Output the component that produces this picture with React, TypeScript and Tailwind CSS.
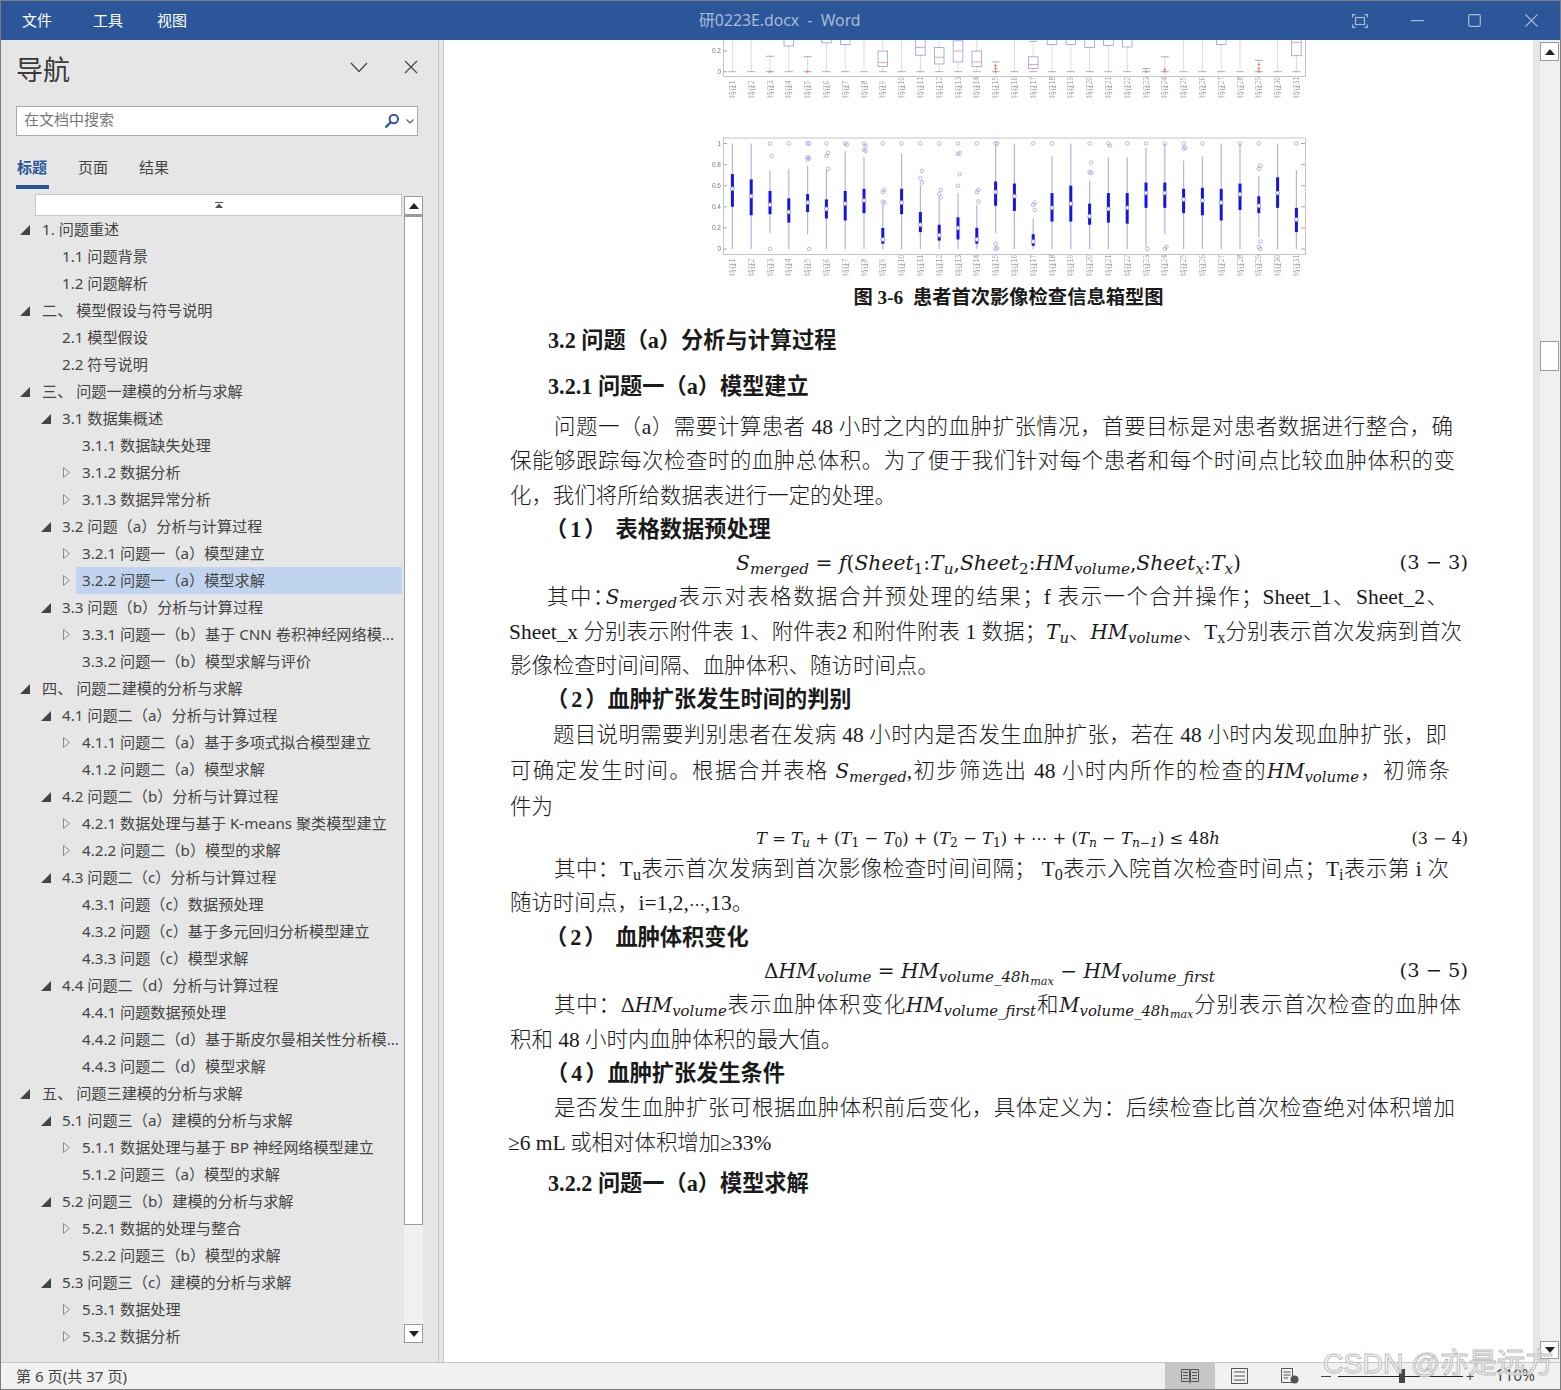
import React from "react";

type Row = [number, "o" | "c" | "", string];
const rows: Row[] = [
  [1, "o", "1. 问题重述"],
  [2, "", "1.1 问题背景"],
  [2, "", "1.2 问题解析"],
  [1, "o", "二、 模型假设与符号说明"],
  [2, "", "2.1 模型假设"],
  [2, "", "2.2 符号说明"],
  [1, "o", "三、 问题一建模的分析与求解"],
  [2, "o", "3.1 数据集概述"],
  [3, "", "3.1.1 数据缺失处理"],
  [3, "c", "3.1.2 数据分析"],
  [3, "c", "3.1.3 数据异常分析"],
  [2, "o", "3.2 问题（a）分析与计算过程"],
  [3, "c", "3.2.1 问题一（a）模型建立"],
  [3, "c", "3.2.2 问题一（a）模型求解"],
  [2, "o", "3.3 问题（b）分析与计算过程"],
  [3, "c", "3.3.1 问题一（b）基于 CNN 卷积神经网络模..."],
  [3, "", "3.3.2 问题一（b）模型求解与评价"],
  [1, "o", "四、 问题二建模的分析与求解"],
  [2, "o", "4.1 问题二（a）分析与计算过程"],
  [3, "c", "4.1.1 问题二（a）基于多项式拟合模型建立"],
  [3, "", "4.1.2 问题二（a）模型求解"],
  [2, "o", "4.2 问题二（b）分析与计算过程"],
  [3, "c", "4.2.1 数据处理与基于 K-means 聚类模型建立"],
  [3, "c", "4.2.2 问题二（b）模型的求解"],
  [2, "o", "4.3 问题二（c）分析与计算过程"],
  [3, "", "4.3.1 问题（c）数据预处理"],
  [3, "", "4.3.2 问题（c）基于多元回归分析模型建立"],
  [3, "", "4.3.3 问题（c）模型求解"],
  [2, "o", "4.4 问题二（d）分析与计算过程"],
  [3, "", "4.4.1 问题数据预处理"],
  [3, "", "4.4.2 问题二（d）基于斯皮尔曼相关性分析模..."],
  [3, "", "4.4.3 问题二（d）模型求解"],
  [1, "o", "五、 问题三建模的分析与求解"],
  [2, "o", "5.1 问题三（a）建模的分析与求解"],
  [3, "c", "5.1.1 数据处理与基于 BP 神经网络模型建立"],
  [3, "", "5.1.2 问题三（a）模型的求解"],
  [2, "o", "5.2 问题三（b）建模的分析与求解"],
  [3, "c", "5.2.1 数据的处理与整合"],
  [3, "", "5.2.2 问题三（b）模型的求解"],
  [2, "o", "5.3 问题三（c）建模的分析与求解"],
  [3, "c", "5.3.1 数据处理"],
  [3, "c", "5.3.2 数据分析"],
];

type B = [number, number, number, number, number, number[]];
const boxes2: B[] = [
  [.4,.71,.57,0,1,[]],[.32,.66,.5,0,1,[]],[.33,.55,.42,.15,.74,[1,.88,0]],[.25,.48,.35,0,.76,[1]],
  [.35,.52,.44,.14,.79,[1,1,.87,.86,.85,0]],[.29,.47,.38,0,.75,[1,.91,.88,.76]],[.27,.55,.43,0,.93,[1,.99]],
  [.34,.57,.46,0,.87,[1,.98,.94,.93]],[.05,.2,.09,0,.42,[1,.56,.54,.44,.45]],[.33,.57,.44,0,.9,[1]],
  [.16,.35,.23,0,.61,[1,.74,.67,.63]],[.08,.23,.13,0,.48,[1,.56,.52,.49]],[.09,.3,.2,0,.53,[1,.91,.9,.71,.6]],
  [.05,.2,.09,0,.42,[1,.56,.54,.45]],[.41,.64,.54,.15,.98,[1,1,.05,.01,0]],[.36,.62,.5,0,1,[]],
  [.03,.14,.07,0,.29,[1,.44,.42,.37]],[.26,.53,.39,0,.88,[1]],[.26,.6,.43,0,1,[]],[.23,.43,.31,0,.65,[1,.82,.73,.72]],
  [.25,.53,.38,0,.87,[1,.98]],[.24,.53,.39,0,.87,[1]],[.39,.63,.53,.02,.96,[1,0]],[.39,.63,.53,.14,1,[1,.02,0]],
  [.34,.57,.47,0,.84,[1,.96,.95]],[.32,.58,.46,0,.88,[1]],[.27,.57,.44,0,1,[]],[.37,.62,.52,0,1,[1]],
  [.34,.5,.41,.11,.69,[1,.79,.76,.07,.02,0]],[.39,.68,.53,0,1,[]],[.16,.39,.28,0,.75,[1]],
];
const boxes1: [number, number, number, number, number[]][] = [
  [-1,0,0,1,[]],[-1,0,0,1,[]],[-1,0,0,.15,[0]],[.25,1,-1,1,[]],[-1,0,0,.145,[0]],[.28,1,-1,1,[]],[.265,1,-1,1,[]],[-1,0,0,1,[]],
  [.05,.2,.09,1,[]],[-1,0,0,1,[]],[.16,1,.235,1,[]],[.075,.235,.14,1,[]],[.095,.3,.2,1,[]],[.05,.2,.095,1,[]],[-1,0,0,.095,[.06,.03,0]],
  [-1,0,0,1,[]],[.03,.145,.07,.295,[]],[.265,1,-1,1,[]],[.265,1,-1,1,[]],[.235,1,-1,1,[]],[.255,1,-1,1,[]],[.24,1,-1,1,[]],
  [-1,0,0,.03,[0]],[-1,0,0,.145,[.02,0]],[-1,0,0,1,[]],[-1,0,0,1,[]],[.265,1,-1,1,[]],[-1,0,0,1,[]],[-1,0,0,.11,[.07,.03,0]],[-1,0,0,1,[]],[.155,1,.285,1,[]],
];

const X = (i: number) => 17.4 + i * 18.8;

function XLabels({ y }: { y: number }) {
  return (
    <g fill="#7c7c7c" fontSize="6.9" fontFamily="'Noto Sans CJK SC', sans-serif">
      {boxes2.map((_, i) => (
        <text key={i} transform={`translate(${X(i) + 2.5},${y}) rotate(-90)`}>{`特征${i + 1}`}</text>
      ))}
    </g>
  );
}

function TopChart() {
  const Y = (v: number) => 31.7 - v * 103;
  return (
    <svg width="620" height="60" viewBox="-16 0 620 60" className="block ml-[255px] blur-[0.3px]">
      <line x1="8.5" y1="0" x2="8.5" y2="36.5" stroke="#c4c4c4" />
      <line x1="8" y1="36.5" x2="590" y2="36.5" stroke="#c4c4c4" />
      <line x1="590.5" y1="0" x2="590.5" y2="36.5" stroke="#c4c4c4" />
      <g fill="#777" fontSize="6.5" fontFamily="'Liberation Sans', sans-serif" textAnchor="end">
        <text x="6" y="13.3">0.2</text>
        <text x="6" y="34">0</text>
      </g>
      <line x1="8" y1="11" x2="12" y2="11" stroke="#aaa" />
      <line x1="8" y1="31.7" x2="12" y2="31.7" stroke="#aaa" />
      {boxes1.map((b, i) => {
        const x = X(i);
        const [q1, q3, m, cap, out] = b;
        const hasBox = q1 >= 0;
        return (
          <g key={i}>
            <line x1={x} x2={x} y1={Y(cap)} y2={31.7} stroke="#999" strokeDasharray="1 1" strokeWidth="0.7" />
            {cap < 1 && <line x1={x - 4} x2={x + 4} y1={Y(cap)} y2={Y(cap)} stroke="#888" strokeWidth="0.7" />}
            <line x1={x - 4} x2={x + 4} y1={31.7} y2={31.7} stroke="#999" strokeWidth="0.8" />
            {hasBox && (
              <rect x={x - 4.8} y={Y(q3)} width="9.6" height={Y(q1) - Y(q3)} fill="white" stroke="#9a9ae0" strokeWidth="0.8" />
            )}
            {hasBox && m >= 0 && <line x1={x - 4.8} x2={x + 4.8} y1={Y(m)} y2={Y(m)} stroke="#ef9a9a" strokeWidth="0.9" />}
            {out.map((o, k) => (
              <path key={k} d={`M${x - 1.6} ${Y(o)}H${x + 1.6}M${x} ${Y(o) - 1.6}V${Y(o) + 1.6}`} stroke="#ef7a7a" strokeWidth="0.8" />
            ))}
          </g>
        );
      })}
      <XLabels y={58} />
    </svg>
  );
}

function MainChart() {
  const Y = (v: number) => 112 - v * 105.5;
  return (
    <svg width="620" height="142" viewBox="-16 0 620 142" className="block ml-[255px] mt-[37px] blur-[0.3px]">
      <rect x="8.5" y="1" width="582" height="116.5" fill="white" stroke="#c4c4c4" />
      <g fill="#777" fontSize="6.5" fontFamily="'Liberation Sans', sans-serif" textAnchor="end">
        {[0, .2, .4, .6, .8, 1].map((v) => (
          <g key={v}>
            <text x="6" y={Y(v) + 2.2}>{v === 0 || v === 1 ? String(v) : v.toFixed(1)}</text>
            <line x1="8.5" x2="12" y1={Y(v)} y2={Y(v)} stroke="#aaa" />
            <line x1="586" x2="590" y1={Y(v)} y2={Y(v)} stroke="#aaa" />
          </g>
        ))}
      </g>
      {boxes2.map((b, i) => {
        const x = X(i);
        const [q1, q3, m, lo, hi, out] = b;
        return (
          <g key={i}>
            <line x1={x} x2={x} y1={Y(hi)} y2={Y(lo)} stroke="#b4b4e2" strokeWidth="1.2" />
            <line x1={x} x2={x} y1={Y(q3)} y2={Y(q1)} stroke="#1414e6" strokeWidth="3" />
            <circle cx={x} cy={Y(m)} r="2" fill="#eeeef8" stroke="#8c8c9c" strokeWidth="0.6" />
            {out.map((o, k) => (
              <circle key={k} cx={x + (k % 2 === 0 ? 0 : 1.6)} cy={Y(o)} r="1.8" fill="none" stroke="#8a8ad6" strokeWidth="0.6" />
            ))}
          </g>
        );
      })}
      <XLabels y={139} />
    </svg>
  );
}

function Arrow({ kind }: { kind: "o" | "c" | "" }) {
  if (kind === "o")
    return (
      <svg width="10" height="10" viewBox="0 0 10 10" className="block"><polygon points="10,0 10,10 0,10" fill="#444" /></svg>
    );
  if (kind === "c")
    return (
      <svg width="7" height="11" viewBox="0 0 7 11" className="block"><polygon points="0.5,0.5 6.5,5.5 0.5,10.5" fill="none" stroke="#8a8a8a" /></svg>
    );
  return null;
}

function TreeRow({ row, active }: { row: Row; active: boolean }) {
  const [lvl, kind, text] = row;
  const lead = lvl === 1 ? "pl-[19px]" : lvl === 2 ? "pl-[40px]" : "pl-[62px]";
  const tw = lvl === 1 ? "ml-[5px]" : lvl === 2 ? "ml-[4px]" : "ml-[6px]";
  const aw = lvl === 3 ? "w-[7px]" : "w-[11px]";
  return (
    <div className={`flex items-center h-[27px] ${lead}`}>
      <div className={`${aw} flex items-center shrink-0`}><Arrow kind={kind} /></div>
      <div className={`${tw} flex-1 h-[27px] leading-[26px] whitespace-nowrap overflow-hidden pl-[6px] ${active ? "bg-[#c0d4ef]" : ""}`}>
        {text}
      </div>
    </div>
  );
}

function M({ children }: { children: React.ReactNode }) {
  return <span className="[font-family:'DejaVu_Serif',serif] italic font-normal">{children}</span>;
}
function I({ children }: { children: React.ReactNode }) {
  return <span className="[font-family:'DejaVu_Serif',serif] italic font-normal text-[19.8px]">{children}</span>;
}
function Num({ children }: { children: React.ReactNode }) {
  return <span className="mx-[3px]">{children}</span>;
}

function Nav() {
  return (
    <aside className="w-[437px] shrink-0 bg-[#e6e6e6] flex flex-col [font-family:'Noto_Sans','Noto_Sans_CJK_SC',sans-serif] text-[#444] text-[15.15px]">
      <div className="h-[66px] flex items-center pl-[15px] pr-[20px] shrink-0">
        <div className="text-[27px] text-[#3a3a3a] leading-none mt-[-7px]">导航</div>
        <svg width="18" height="11" viewBox="0 0 18 11" className="ml-auto mt-[-12px]"><path d="M1 1 L9 9.5 L17 1" fill="none" stroke="#444" strokeWidth="1.2" /></svg>
        <svg width="14" height="14" viewBox="0 0 14 14" className="ml-[36px] mt-[-12px]"><path d="M1 1 L13 13 M13 1 L1 13" fill="none" stroke="#444" strokeWidth="1.2" /></svg>
      </div>
      <div className="mx-[15px] w-[402px] h-[30px] bg-white border border-[#ababab] flex items-center pl-[7px] pr-[2px] shrink-0">
        <span className="text-[#777] text-[15px] mt-[-3px]">在文档中搜索</span>
        <svg width="16" height="16" viewBox="0 0 16 16" className="ml-auto"><circle cx="9.8" cy="6" r="4.2" fill="none" stroke="#2b579a" strokeWidth="2" /><path d="M6.8 9 L1.5 14.5" stroke="#2b579a" strokeWidth="2.4" /></svg>
        <svg width="8" height="5" viewBox="0 0 8 5" className="ml-[6px] mr-[1px]"><path d="M0.5 0.5 L4 4 L7.5 0.5" fill="none" stroke="#555" strokeWidth="1.1" /></svg>
      </div>
      <div className="h-[58px] pl-[15px] flex items-start pt-[20px] shrink-0 text-[15px]">
        <div className="text-[#2b579a] font-semibold h-[33px] w-[33px] leading-[22px] pl-[1px] border-b-[4px] border-[#2b579a] whitespace-nowrap">标题</div>
        <div className="leading-[22px] ml-[29px]">页面</div>
        <div className="leading-[22px] ml-[31px]">结果</div>
      </div>
      <div className="flex-1 flex min-h-0">
        <div className="w-[401px] mr-[2px] shrink-0 flex flex-col">
          <div className="ml-[34px] w-[367px] h-[22px] bg-white border border-[#c6c6c6] flex items-center justify-center shrink-0">
            <svg width="8" height="6" viewBox="0 0 8 6"><rect x="0" y="0" width="8" height="1" fill="#555" /><polygon points="4,1.5 8,6 0,6" fill="#555" /></svg>
          </div>
          {rows.map((r, i) => (
            <TreeRow key={i} row={r} active={i === 13} />
          ))}
        </div>
        <div className="w-[19px] flex flex-col mt-[2px] bg-[#f0f0f0] h-[1147px]">
          <div className="h-[19px] bg-white border border-[#9a9a9a] flex items-center justify-center shrink-0">
            <svg width="10" height="6" viewBox="0 0 10 6"><polygon points="5,0 10,6 0,6" fill="#222" /></svg>
          </div>
          <div className="h-[1010px] bg-white border border-[#9a9a9a] border-t-2 shrink-0" />
          <div className="flex-1" />
          <div className="h-[19px] bg-white border border-[#9a9a9a] flex items-center justify-center shrink-0">
            <svg width="10" height="6" viewBox="0 0 10 6"><polygon points="0,0 10,0 5,6" fill="#222" /></svg>
          </div>
        </div>
      </div>
    </aside>
  );
}

const P = "ml-[66px] w-[945px] whitespace-nowrap [text-align-last:justify]";
const H = "font-bold text-[22.2px] whitespace-nowrap";
const E = "ml-[66px] w-[958px] flex whitespace-nowrap [font-family:'DejaVu_Serif',serif]";

function Doc() {
  return (
    <main className="w-[1089px] shrink-0 bg-white overflow-hidden [font-family:'Liberation_Serif','Noto_Sans_CJK_SC',serif] text-[21.45px] font-light text-[#1a1a1a]">
      <TopChart />
      <MainChart />
      <div className="h-[37px] leading-[37px] text-center font-bold text-[19.3px] pl-[40px]">图 3-6&nbsp;&nbsp;患者首次影像检查信息箱型图</div>
      <div className={`h-[50px] leading-[50px] ml-[104px] ${H}`}>3.2 问题（a）分析与计算过程</div>
      <div className={`h-[42px] leading-[42px] ml-[104px] ${H}`}>3.2.1 问题一（a）模型建立</div>
      <div className="h-[38px] leading-[38px] ml-[110px] w-[899px] whitespace-nowrap [text-align-last:justify]">问题一（a）需要计算患者 48 小时之内的血肿扩张情况，首要目标是对患者数据进行整合，确</div>
      <div className={`h-[30px] leading-[30px] ${P}`}>保能够跟踪每次检查时的血肿总体积。为了便于我们针对每个患者和每个时间点比较血肿体积的变</div>
      <div className="h-[40px] leading-[40px] ml-[66px] whitespace-nowrap">化，我们将所给数据表进行一定的处理。</div>
      <div className={`h-[28px] leading-[28px] ml-[101px] ${H}`}>（<Num>1</Num>）<span className="ml-[9px]">表格数据预处理</span></div>
      <div className={`h-[38px] leading-[38px] ${E} text-[19.4px]`}>
        <div className="ml-[226px] text-[20.3px]"><M>S<sub>merged</sub></M> = <M>f</M>(<M>Sheet</M><sub>1</sub>:<M>T<sub>u</sub></M>,<M>Sheet</M><sub>2</sub>:<M>HM<sub>volume</sub></M>,<M>Sheet<sub>x</sub></M>:<M>T<sub>x</sub></M>)</div>
        <div className="ml-auto">(3 − 3)</div>
      </div>
      <div className="h-[30px] leading-[30px] ml-[103px] w-[901px] whitespace-nowrap [text-align-last:justify]">其中<span className="tracking-[-10px]">：</span><I>S<sub>merged</sub></I>表示对表格数据合并预处理的结果；f 表示一个合并操作；Sheet_1、Sheet_2、</div>
      <div className="h-[40px] leading-[40px] ml-[65px] w-[953px] whitespace-nowrap [text-align-last:justify]">Sheet_x 分别表示附件表 1、附件表2 和附件附表 1 数据；<I>T<sub>u</sub></I>、<I>HM<sub>volume</sub></I>、T<sub>x</sub>分别表示首次发病到首次</div>
      <div className="h-[28px] leading-[28px] ml-[66px] whitespace-nowrap">影像检查时间间隔、血肿体积、随访时间点。</div>
      <div className={`h-[40px] leading-[40px] ml-[102px] ${H}`}>（<Num>2</Num>）血肿扩张发生时间的判别</div>
      <div className="h-[30px] leading-[30px] ml-[109px] w-[894px] whitespace-nowrap [text-align-last:justify]">题目说明需要判别患者在发病 48 小时内是否发生血肿扩张，若在 48 小时内发现血肿扩张，即</div>
      <div className="h-[42px] leading-[42px] ml-[66px] w-[940px] whitespace-nowrap [text-align-last:justify]">可确定发生时间。根据合并表格 <I>S<sub>merged</sub></I>,初步筛选出 48 小时内所作的检查的<I>HM<sub>volume</sub></I>，初筛条</div>
      <div className="h-[30px] leading-[30px] ml-[66px]">件为</div>
      <div className={`h-[34px] leading-[34px] ${E} text-[16px]`}>
        <div className="ml-[246px] text-[16.4px]"><M>T</M> = <M>T<sub>u</sub></M> + (<M>T</M><sub>1</sub> − <M>T</M><sub>0</sub>) + (<M>T</M><sub>2</sub> − <M>T</M><sub>1</sub>) + ⋯ + (<M>T<sub>n</sub></M> − <M>T<sub>n−1</sub></M>) ≤ 48<M>h</M></div>
        <div className="ml-auto">(3 − 4)</div>
      </div>
      <div className="h-[26px] leading-[26px] ml-[110px] w-[895px] whitespace-nowrap [text-align-last:justify]">其中：T<sub>u</sub>表示首次发病到首次影像检查时间间隔； T<sub>0</sub>表示入院首次检查时间点；T<sub>i</sub>表示第 i 次</div>
      <div className="h-[42px] leading-[42px] ml-[66px] whitespace-nowrap">随访时间点，i=1,2,<span className="[font-family:'DejaVu_Serif',serif] text-[16px]">⋯</span>,13。</div>
      <div className={`h-[28px] leading-[28px] ml-[101px] ${H}`}>（<Num>2</Num>）<span className="ml-[9px]">血肿体积变化</span></div>
      <div className={`h-[38px] leading-[38px] ${E} text-[19.4px]`}>
        <div className="ml-[254px] text-[20px]">Δ<M>HM<sub>volume</sub></M> = <M>HM<sub>volume_48h<sub>max</sub></sub></M> − <M>HM<sub>volume_first</sub></M></div>
        <div className="ml-auto">(3 − 5)</div>
      </div>
      <div className="h-[30px] leading-[30px] ml-[110px] w-[907px] whitespace-nowrap [text-align-last:justify]">其中：Δ<I>HM<sub>volume</sub></I>表示血肿体积变化<I>HM<sub>volume_first</sub></I>和<I>M<sub>volume_48h<sub>max</sub></sub></I>分别表示首次检查的血肿体</div>
      <div className="h-[40px] leading-[40px] ml-[66px] whitespace-nowrap">积和 48 小时内血肿体积的最大值。</div>
      <div className={`h-[28px] leading-[28px] ml-[102px] ${H}`}>（<Num>4</Num>）血肿扩张发生条件</div>
      <div className="h-[40px] leading-[40px] ml-[110px] w-[901px] whitespace-nowrap [text-align-last:justify]">是否发生血肿扩张可根据血肿体积前后变化，具体定义为：后续检查比首次检查绝对体积增加</div>
      <div className="h-[30px] leading-[30px] ml-[64px] whitespace-nowrap">≥6 mL 或相对体积增加≥33%</div>
      <div className={`h-[52px] leading-[52px] ml-[104px] ${H}`}>3.2.2 问题一（a）模型求解</div>
    </main>
  );
}

export default function App() {
  return (
    <div className="relative w-[1561px] h-[1390px] overflow-hidden flex flex-col border border-[#7d7d7d] bg-[#e6e6e6]">
      <header className="h-[39px] shrink-0 bg-[#2b579a] flex items-center [font-family:'Noto_Sans','Noto_Sans_CJK_SC',sans-serif] text-[15px]">
        <span className="ml-[21px] text-white">文件</span>
        <span className="ml-[41px] text-white">工具</span>
        <span className="ml-[34px] text-white">视图</span>
        <span className="ml-[512px] text-[#a9bbd6] text-[15.8px] whitespace-pre">研0223E.docx  -  Word</span>
        <div className="ml-auto flex items-center">
          <svg width="16" height="14" viewBox="0 0 16 14" className="mr-[43px]" fill="none" stroke="#a9bbd6" strokeWidth="1.2"><path d="M0.6 3.5V0.6H3.5M12.5 0.6H15.4V3.5M15.4 10.5V13.4H12.5M3.5 13.4H0.6V10.5" /><rect x="3.5" y="3.5" width="9" height="7" /></svg>
          <svg width="13" height="2" viewBox="0 0 13 2" className="mr-[44px]"><rect width="13" height="1.2" fill="#a9bbd6" /></svg>
          <svg width="13" height="13" viewBox="0 0 13 13" className="mr-[44px]"><rect x="0.7" y="0.7" width="11.6" height="11.6" rx="1.5" fill="none" stroke="#a9bbd6" strokeWidth="1.2" /></svg>
          <svg width="13" height="13" viewBox="0 0 13 13" className="mr-[22px]"><path d="M0.5 0.5L12.5 12.5M12.5 0.5L0.5 12.5" stroke="#a9bbd6" strokeWidth="1.1" /></svg>
        </div>
      </header>
      <div className="flex-1 flex min-h-0">
        <Nav />
        <div className="w-[6px] shrink-0 border-l border-r border-[#c8c8c8] bg-[#e6e6e6]" />
        <Doc />
        <div className="flex-1 flex bg-[#f0f0f0]">
          <div className="w-[7px] bg-[#e6e6e6] shrink-0" />
          <div className="w-[19px] flex flex-col mt-[2px] mb-[3px]">
            <div className="h-[19px] bg-white border border-[#9a9a9a] flex items-center justify-center shrink-0">
              <svg width="10" height="6" viewBox="0 0 10 6"><polygon points="5,0 10,6 0,6" fill="#222" /></svg>
            </div>
            <div className="h-[30px] mt-[280px] bg-white border border-[#9a9a9a] shrink-0" />
            <div className="flex-1" />
            <div className="h-[18px] bg-white border border-[#9a9a9a] flex items-center justify-center shrink-0">
              <svg width="10" height="6" viewBox="0 0 10 6"><polygon points="0,0 10,0 5,6" fill="#222" /></svg>
            </div>
          </div>
        </div>
      </div>
      <footer className="h-[27px] shrink-0 bg-[#f1f1f1] border-t border-[#c6c6c6] flex items-center [font-family:'Noto_Sans','Noto_Sans_CJK_SC',sans-serif] text-[15.1px] text-[#444]">
        <span className="ml-[15px]">第 6 页(共 37 页)</span>
        <div className="ml-auto flex items-center h-full">
          <div className="w-[50px] h-full bg-[#c6c6c6] flex items-center justify-center">
            <svg width="18" height="16" viewBox="0 0 18 16" fill="none" stroke="#555"><path d="M0.5 1.5H8.5V13.5H0.5ZM9.5 1.5H17.5V13.5H9.5ZM2 4.5H7M2 7.5H7M2 10.5H7M11 4.5H16M11 7.5H16M11 10.5H16M9 13.5V15.5" /></svg>
          </div>
          <div className="w-[50px] h-full flex items-center justify-center">
            <svg width="17" height="16" viewBox="0 0 17 16" fill="none" stroke="#555"><path d="M0.5 0.5H16.5V15.5H0.5ZM3 4H14M3 8H14M3 12H14" /></svg>
          </div>
          <div className="w-[50px] h-full flex items-center justify-center">
            <svg width="18" height="16" viewBox="0 0 18 16" fill="none" stroke="#555"><path d="M0.5 0.5H11.5V14.5H0.5ZM2.5 4H9.5M2.5 7H9.5M2.5 10H7" /><circle cx="13.5" cy="11.5" r="4" fill="#555" stroke="none" /></svg>
          </div>
          <span className="ml-[6px] w-[10px] h-px bg-[#444]" />
          <div className="ml-[7px] w-[125px] h-px bg-[#222] relative">
            <div className="absolute left-[61px] top-[-7px] w-[6px] h-[14px] bg-[#444]" />
          </div>
          <span className="ml-[1px] w-[13px] text-center text-[15px]">+</span>
          <span className="ml-[19px] mr-[25px] text-[15.5px]">110%</span>
        </div>
      </footer>
      <div className="absolute left-[1322px] top-[1344px] whitespace-nowrap text-[28.4px] leading-[36px] text-[#ffffffcc] [font-family:'Liberation_Sans','Noto_Sans_CJK_SC',sans-serif] [-webkit-text-stroke:1px_#bcbcbc]">CSDN @亦是远方</div>
    </div>
  );
}
